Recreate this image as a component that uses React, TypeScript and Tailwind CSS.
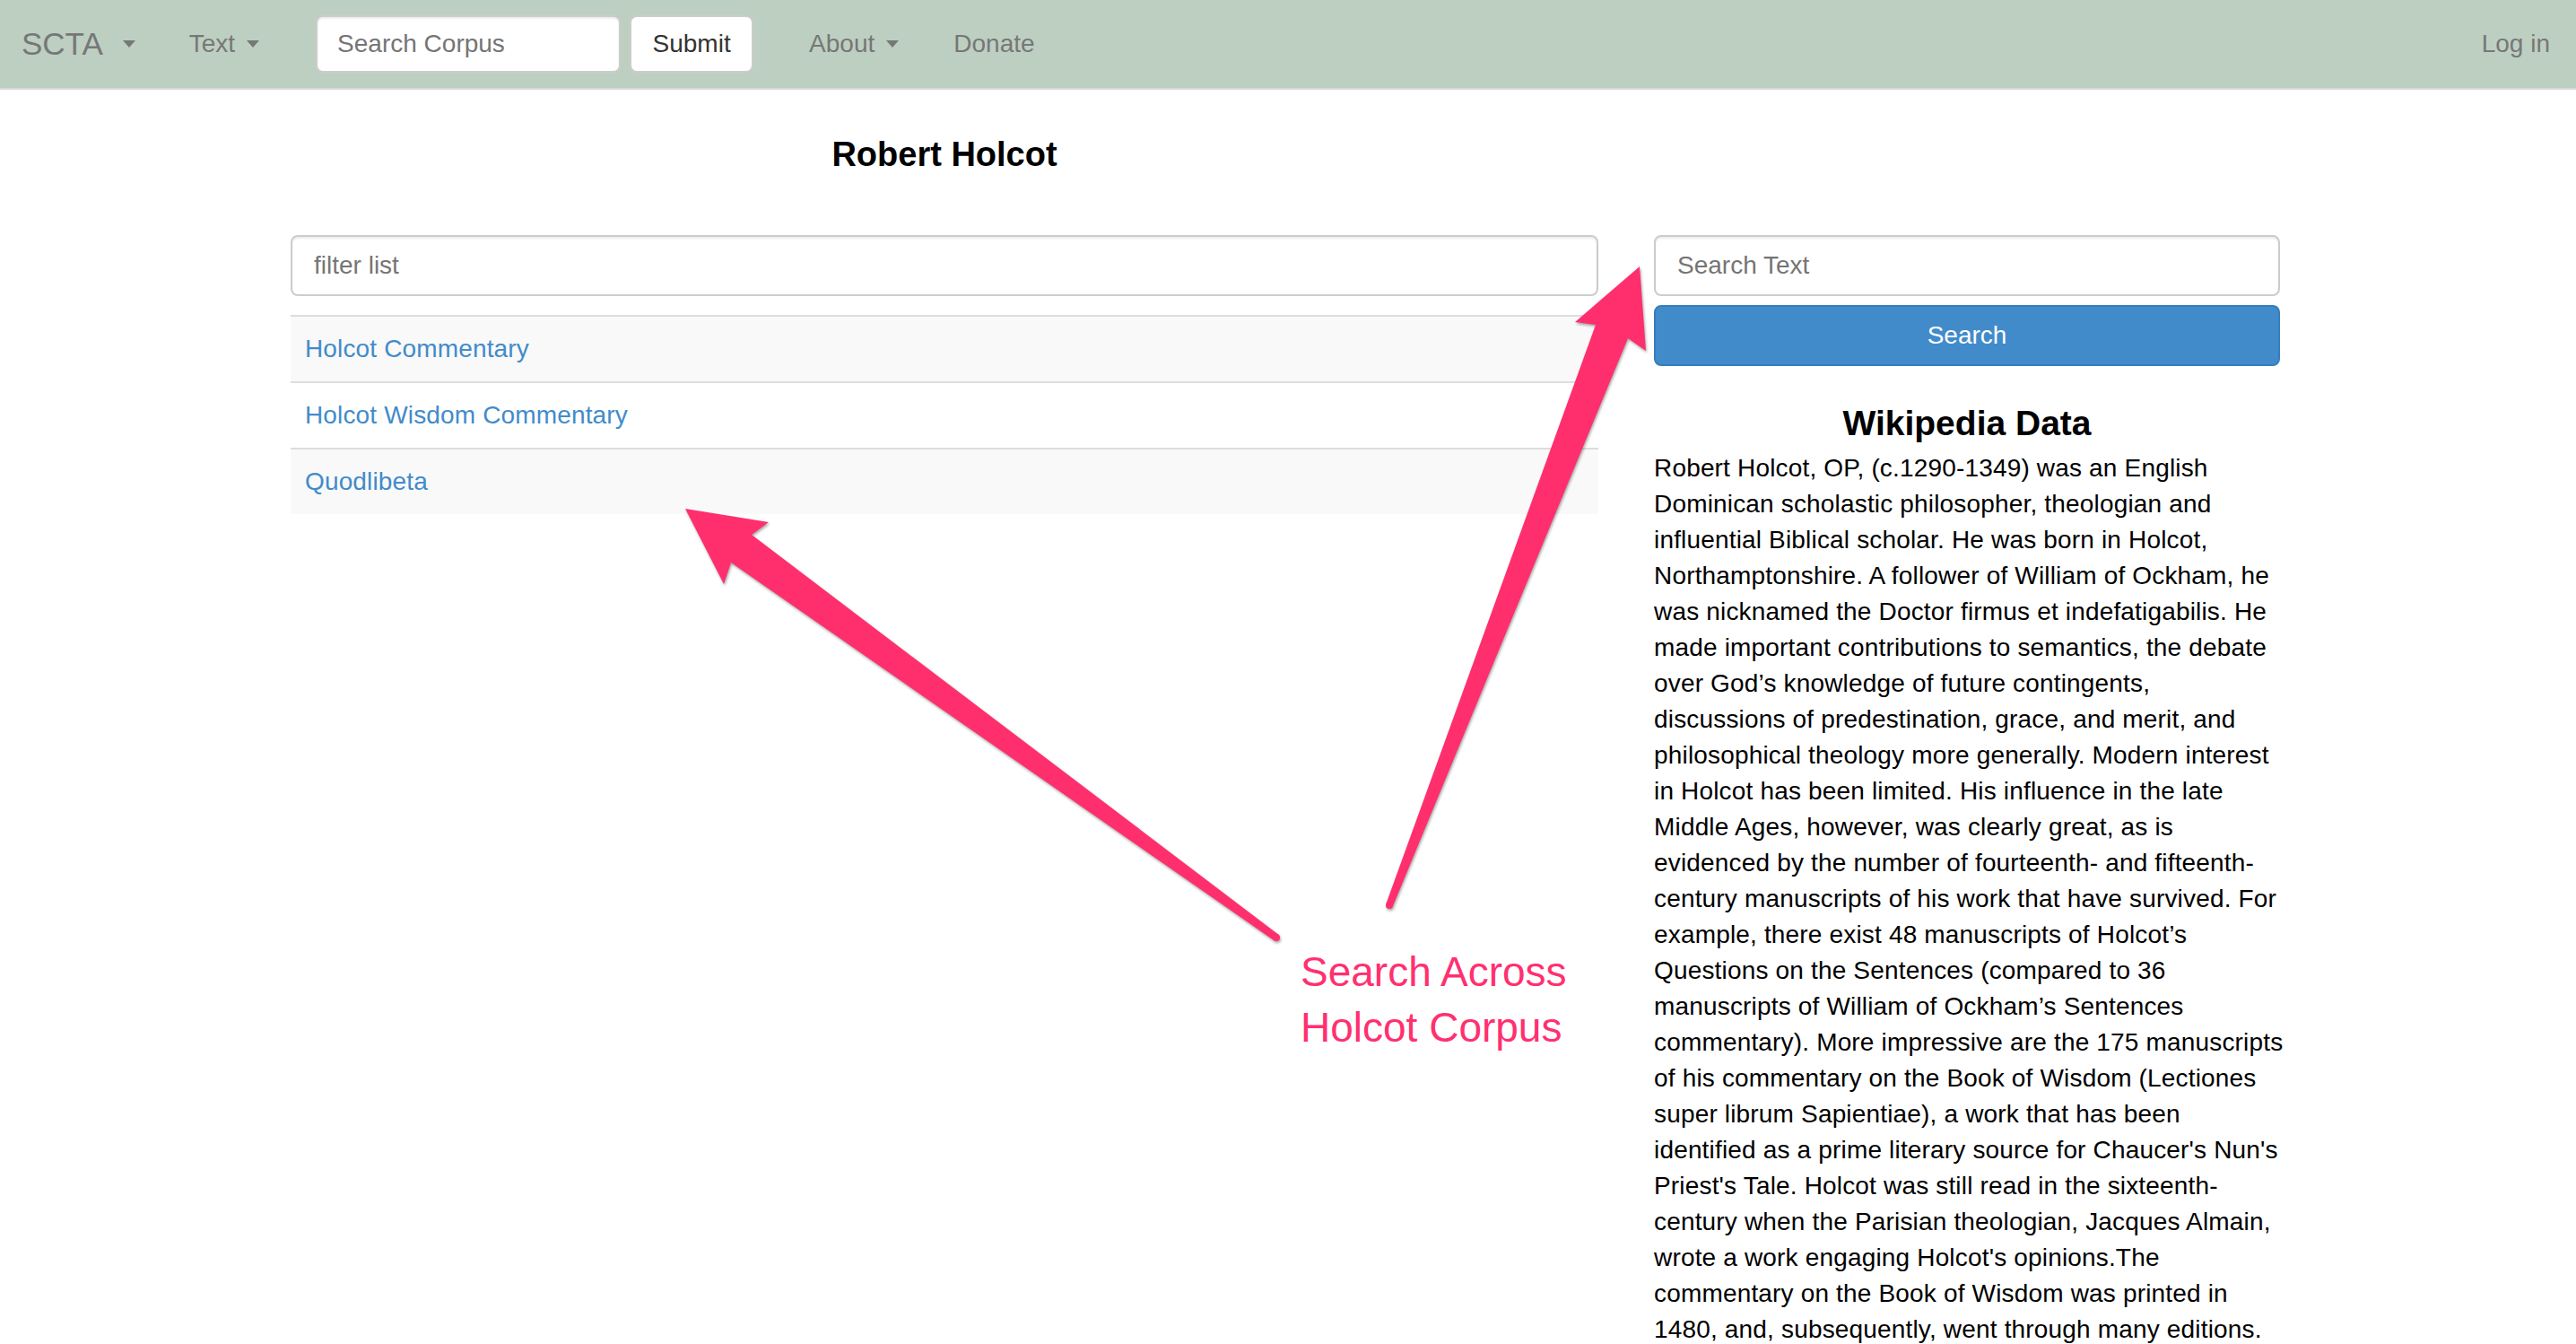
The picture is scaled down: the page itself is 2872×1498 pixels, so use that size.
import React from 'react';

/* ===============================
    Data
================================ */
const works = ['Holcot Commentary', 'Holcot Wisdom Commentary', 'Quodlibeta'];

// lines kept as in the page, so the column wraps the same way
const bio = [
  'Robert Holcot, OP, (c.1290-1349) was an English',
  'Dominican scholastic philosopher, theologian and',
  'influential Biblical scholar. He was born in Holcot,',
  'Northamptonshire. A follower of William of Ockham, he',
  'was nicknamed the Doctor firmus et indefatigabilis. He',
  'made important contributions to semantics, the debate',
  'over God\u2019s knowledge of future contingents,',
  'discussions of predestination, grace, and merit, and',
  'philosophical theology more generally. Modern interest',
  'in Holcot has been limited. His influence in the late',
  'Middle Ages, however, was clearly great, as is',
  'evidenced by the number of fourteenth- and fifteenth-',
  'century manuscripts of his work that have survived. For',
  'example, there exist 48 manuscripts of Holcot\u2019s',
  'Questions on the Sentences (compared to 36',
  'manuscripts of William of Ockham\u2019s Sentences',
  'commentary). More impressive are the 175 manuscripts',
  'of his commentary on the Book of Wisdom (Lectiones',
  'super librum Sapientiae), a work that has been',
  "identified as a prime literary source for Chaucer's Nun's",
  "Priest's Tale. Holcot was still read in the sixteenth-",
  'century when the Parisian theologian, Jacques Almain,',
  "wrote a work engaging Holcot's opinions.The",
  'commentary on the Book of Wisdom was printed in',
  '1480, and, subsequently, went through many editions.',
];

function Caret({ className = '' }: { className?: string }) {
  return (
    <span
      className={`inline-block h-0 w-0 border-x-[7px] border-t-[8px] border-x-transparent border-t-[#777] ${className}`}
    />
  );
}

function Navbar() {
  return (
    <nav className="flex h-[100px] items-center border-b-2 border-[#d9d9d9] bg-[#bdcfc1] text-[28px] text-[#777]">
      {/* Brand */}
      <div className="ml-[24px] flex items-center">
        <span className="text-[35px]">SCTA</span>
        <Caret className="ml-[22px]" />
      </div>

      <div className="ml-[60px] flex items-center">
        <span>Text</span>
        <Caret className="ml-[13px]" />
      </div>

      {/* Corpus search */}
      <input
        type="text"
        placeholder="Search Corpus"
        className="ml-[63px] h-[64px] w-[340px] rounded-[8px] border-2 border-[#ccc] bg-white px-[22px] text-[28px] text-[#555] shadow-[inset_0_2px_2px_rgba(0,0,0,0.075)] outline-none placeholder:text-[#757575]"
      />
      <button
        type="button"
        className="ml-[10px] h-[64px] w-[138px] rounded-[8px] border-2 border-[#ccc] bg-white text-[28px] text-[#333]"
      >
        Submit
      </button>

      <div className="ml-[62px] flex items-center">
        <span>About</span>
        <Caret className="ml-[13px]" />
      </div>

      <span className="ml-[61px]">Donate</span>

      <span className="ml-auto mr-[29px]">Log in</span>
    </nav>
  );
}

function Annotations() {
  return (
    <>
      <svg
        className="pointer-events-none absolute left-0 top-0 drop-shadow-[1px_2px_1.5px_rgba(0,0,0,0.35)]"
        width="2872"
        height="1498"
        viewBox="0 0 2872 1498"
      >
        {/* arrow to the works list */}
        <polygon
          fill="#ff2f6e"
          points="764,567 857,582 838,596 1425.5,1041.8 1420.5,1048.2 815,627 807,651"
        />
        <circle cx="1423" cy="1045" r="4" fill="#ff2f6e" />

        {/* arrow to the text search */}
        <polygon
          fill="#ff2f6e"
          points="1828,297 1835,391 1815,377 1552.7,1010.5 1545.3,1007.5 1779,362 1756,359"
        />
        <circle cx="1549" cy="1009" r="4" fill="#ff2f6e" />
      </svg>

      <div className="pointer-events-none absolute left-[1450px] top-[1052px] text-[46px] leading-[62px] text-[#ff3070]">
        Search Across
        <br />
        Holcot Corpus
      </div>
    </>
  );
}

export default function App() {
  return (
    <div className="relative h-[1498px] w-full overflow-hidden bg-white font-['Liberation_Sans',Arial,sans-serif] text-black">
      <Navbar />

      <main className="ml-[324px] w-[2218px]">
        {/* Title */}
        <h4 className="w-[1458px] pt-[50px] text-center text-[38px] font-bold leading-[44px]">
          Robert Holcot
        </h4>

        <div className="mt-[68px] flex items-start gap-[62px]">
          {/* Works */}
          <div className="w-[1458px]">
            <input
              type="text"
              placeholder="filter list"
              className="h-[68px] w-full rounded-[8px] border-2 border-[#ccc] bg-white px-[24px] text-[28px] text-[#555] shadow-[inset_0_2px_2px_rgba(0,0,0,0.075)] outline-none placeholder:text-[#757575]"
            />

            <div className="mt-[21px]">
              {works.map((w, i) => (
                <div
                  key={w}
                  className={`border-t-2 border-[#ddd] px-[16px] py-[16px] text-[28px] leading-[40px] tracking-[0.15px] ${
                    i % 2 === 0 ? 'bg-[#f9f9f9]' : 'bg-white'
                  }`}
                >
                  <a className="text-[#428bca]">{w}</a>
                </div>
              ))}
            </div>
          </div>

          {/* Text search + wiki */}
          <div className="w-[698px]">
            <input
              type="text"
              placeholder="Search Text"
              className="h-[68px] w-full rounded-[8px] border-2 border-[#ccc] bg-white px-[24px] text-[28px] text-[#555] shadow-[inset_0_2px_2px_rgba(0,0,0,0.075)] outline-none placeholder:text-[#757575]"
            />
            <button
              type="button"
              className="mt-[10px] h-[68px] w-full rounded-[8px] border-2 border-[#357ebd] bg-[#428bca] text-[28px] text-white"
            >
              Search
            </button>

            <h4 className="mt-[42px] text-center text-[39px] font-bold leading-[44px]">
              Wikipedia Data
            </h4>
            <p className="mt-[8px] whitespace-nowrap text-[28px] leading-[40px] tracking-[0.17px]">
              {bio.map((line) => (
                <span key={line} className="block">
                  {line}
                </span>
              ))}
            </p>
          </div>
        </div>
      </main>

      <Annotations />
    </div>
  );
}
